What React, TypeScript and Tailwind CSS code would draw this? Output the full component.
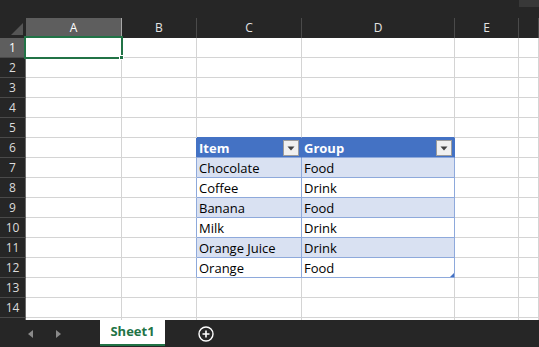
import React from 'react';

const COLS = ['A', 'B', 'C', 'D', 'E', 'F'];
const COL_W = ['w-[96px]', 'w-[75px]', 'w-[105px]', 'w-[153px]', 'w-[64px]', 'flex-1'];

const TABLE: Record<number, [string, string]> = {
  7: ['Chocolate', 'Food'],
  8: ['Coffee', 'Drink'],
  9: ['Banana', 'Food'],
  10: ['Milk', 'Drink'],
  11: ['Orange Juice', 'Drink'],
  12: ['Orange', 'Food'],
};

const FilterButton = () => (
  <div className="absolute right-[2px] top-[2px] w-[16px] h-[16px] bg-[#f0f0f0] border border-[#9c9c9c] flex items-center justify-center">
    <svg width="8" height="5" viewBox="0 0 8 5">
      <path d="M0.5 0.5 L7.5 0.5 L4 4.5 Z" fill="#404040" />
    </svg>
  </div>
);

const Cell: React.FC<{ row: number; col: number }> = ({ row, col }) => {
  const inTable = row >= 6 && row <= 12 && (col === 2 || col === 3);
  const isHeader = row === 6 && inTable;
  const band = inTable && (row === 7 || row === 9 || row === 11);

  let right = 'border-[#d4d4d4]';
  if (row >= 6 && row <= 12 && (col === 1 || col === 2 || col === 3)) right = 'border-[#8ea9db]';
  if (isHeader || (row === 6 && col === 1)) right = 'border-[#4472c4]';

  let bottom = 'border-b-[#d4d4d4]';
  if (inTable) bottom = 'border-b-[#8ea9db]';
  if (row === 5 && (col === 2 || col === 3)) bottom = 'border-b-[#4472c4]';

  const bg = isHeader ? 'bg-[#4472c4]' : band ? 'bg-[#d9e1f2]' : 'bg-white';
  const text = isHeader ? (col === 2 ? 'Item' : 'Group') : inTable ? TABLE[row][col - 2] : '';

  return (
    <div
      className={`relative h-[20px] shrink-0 border-r border-b ${right} ${bottom} ${bg} ${COL_W[col]} flex items-center pl-[2px] text-[13px] leading-none ${
        isHeader ? 'text-white font-bold' : 'text-black'
      }`}
    >
      <span className="pt-[1px]">{text}</span>
      {isHeader && <FilterButton />}
      {row === 12 && col === 3 && (
        <svg className="absolute right-0 bottom-0" width="4" height="4" viewBox="0 0 4 4">
          <path d="M4 0 L4 4 L0 4 Z" fill="#4472c4" />
        </svg>
      )}
    </div>
  );
};

export default function App() {
  const rows = Array.from({ length: 14 }, (_, i) => i + 1);

  return (
    <div className="relative w-[539px] h-[347px] bg-[#262626] flex flex-col overflow-hidden font-['Open_Sans',sans-serif]">
      {/* title strip */}
      <div className="h-[18px] shrink-0 flex justify-end">
        <div className="w-[20px] h-[7px] bg-[#383838]" />
      </div>

      {/* column headers */}
      <div className="h-[20px] shrink-0 flex text-[12px] text-[#e4e4e4]">
        <div className="w-[26px] shrink-0 relative">
          <svg className="absolute right-[3px] bottom-[3px]" width="12" height="12" viewBox="0 0 12 12">
            <path d="M12 0 L12 12 L0 12 Z" fill="#555555" />
          </svg>
        </div>
        {COLS.map((c, i) => (
          <div
            key={c}
            className={`${COL_W[i]} shrink-0 flex items-center justify-center border-r ${
              i === 0 ? 'bg-[#5e5e5e] border-[#a8a8a8] text-white' : 'border-[#4a4a4a]'
            }`}
          >
            {i < 5 ? c : ''}
          </div>
        ))}
      </div>

      {/* grid */}
      <div className="flex-1 overflow-hidden bg-white">
        {rows.map(r => (
          <div key={r} className="flex h-[20px]">
            <div
              className={`w-[26px] shrink-0 h-[20px] flex items-center justify-center text-[12px] border-r border-b border-r-[#6b6b6b] border-b-[#4a4a4a] ${
                r === 1 ? 'bg-[#5e5e5e] text-white' : 'bg-[#262626] text-[#dcdcdc]'
              }`}
            >
              {r}
            </div>
            {COLS.map((c, i) => (
              <Cell key={c} row={r} col={i} />
            ))}
          </div>
        ))}
        {/* partly visible row 15 */}
        <div className="flex h-[2px]">
          <div className="w-[26px] shrink-0 bg-[#262626] border-r border-[#6b6b6b]" />
          {COLS.map((c, i) => (
            <div key={c} className={`${COL_W[i]} shrink-0 border-r border-[#d4d4d4]`} />
          ))}
        </div>
      </div>

      {/* sheet tabs */}
      <div className="h-[27px] shrink-0 flex items-stretch bg-[#262626]">
        <div className="w-[100px] flex items-center">
          <svg className="ml-[28px]" width="5" height="8" viewBox="0 0 5 8">
            <path d="M5 0 L5 8 L0 4 Z" fill="#8a8a8a" />
          </svg>
          <svg className="ml-[23px]" width="5" height="8" viewBox="0 0 5 8">
            <path d="M0 0 L0 8 L5 4 Z" fill="#8a8a8a" />
          </svg>
        </div>
        <div className="w-[65px] flex flex-col">
          <div className="flex-1 bg-white flex items-center justify-center text-[13px] font-bold text-[#217346]">
            Sheet1
          </div>
          <div className="h-[2px] bg-[#217346]" />
          <div className="h-[1px]" />
        </div>
        <div className="flex items-center pl-[33px]">
          <svg width="16" height="16" viewBox="0 0 16 16">
            <circle cx="8" cy="8" r="7" fill="none" stroke="#ffffff" strokeWidth="1.4" />
            <path d="M8 4.5 V11.5 M4.5 8 H11.5" stroke="#ffffff" strokeWidth="1.6" />
          </svg>
        </div>
      </div>

      {/* active cell selection */}
      <div className="absolute left-[24px] top-[36px] w-[99px] h-[23px] border-2 border-[#217346] pointer-events-none" />
      <div className="absolute left-[119px] top-[55px] w-[5px] h-[5px] bg-[#217346] border border-white" />
    </div>
  );
}
